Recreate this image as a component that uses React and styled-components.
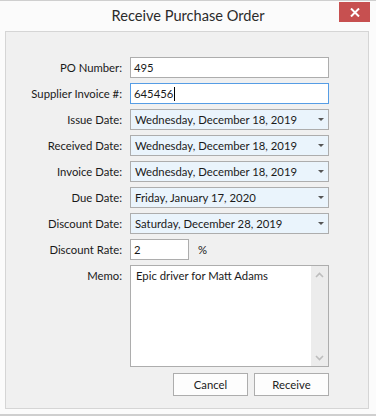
import { Fragment } from "react";
import styled, { createGlobalStyle } from "styled-components";

const Global = createGlobalStyle`
  html, body {
    margin: 0;
    padding: 0;
    background: #fbfbfb;
  }
  body {
    font-family: Lato, "Liberation Sans", sans-serif;
    font-size: 11.3px;
    color: #1a1a1a;
  }
`;

// 창 전체
const Window = styled.div`
  width: 376px;
  height: 416px;
  box-sizing: border-box;
  border-top: 1px solid #cfcfcf;
  border-bottom: 2px solid #cfcfcf;
  background: #fbfbfb;
  display: flex;
  flex-direction: column;
`;

const TitleBar = styled.div`
  height: 30px;
  display: grid;
  grid-template-columns: 1fr auto 1fr;
  align-items: start;
`;

const Title = styled.div`
  grid-column: 2;
  font-size: 14.6px;
  line-height: 29px;
  color: #2b2b2b;
`;

const CloseButton = styled.div`
  grid-column: 3;
  justify-self: end;
  margin: 1px 6px 0 0;
  width: 31px;
  height: 20px;
  background: #c75050;
  display: flex;
  align-items: center;
  justify-content: center;
`;

const Panel = styled.div`
  margin: 0 7px 0 5px;
  height: 378px;
  box-sizing: border-box;
  border: 1px solid #d5d5d5;
  background: #f0f0f0;
  padding: 25px 39px 0 0;
`;

const Form = styled.div`
  display: grid;
  grid-template-columns: 116px 199px;
  column-gap: 8px;
  row-gap: 5px;
  align-items: center;
`;

const Label = styled.div`
  text-align: right;
  align-self: ${(p) => (p.$top ? "start" : "center")};
  padding-top: ${(p) => (p.$top ? "4px" : "0")};
`;

const TextBox = styled.div`
  height: 21px;
  width: ${(p) => p.$width || "auto"};
  box-sizing: border-box;
  border: 1px solid ${(p) => (p.$focused ? "#569de5" : "#adadad")};
  background: #fff;
  padding: 0 3px;
  display: flex;
  align-items: center;
  white-space: nowrap;
`;

const Caret = styled.span`
  display: inline-block;
  width: 1px;
  height: 14px;
  background: #000;
  margin-left: 1px;
`;

const DateBox = styled.div`
  height: 21px;
  box-sizing: border-box;
  border: 1px solid #adadad;
  background: #eaf4fc;
  padding: 0 4px 0 4px;
  display: flex;
  align-items: center;
  justify-content: space-between;
  white-space: nowrap;
`;

const Arrow = styled.span`
  width: 0;
  height: 0;
  border-left: 3px solid transparent;
  border-right: 3px solid transparent;
  border-top: 3px solid #555;
`;

const RateRow = styled.div`
  display: flex;
  align-items: center;
  gap: 9px;
`;

const Memo = styled.div`
  height: 102px;
  box-sizing: border-box;
  border: 1px solid #adadad;
  background: #fff;
  display: flex;
`;

const MemoText = styled.div`
  flex: 1;
  padding: 3px 5px;
`;

const ScrollBar = styled.div`
  width: 17px;
  background: #ececec;
  display: flex;
  flex-direction: column;
  justify-content: space-between;
  align-items: center;
  padding: 6px 0 5px;
`;

const Buttons = styled.div`
  grid-column: 2;
  display: flex;
  justify-content: flex-end;
  gap: 6px;
  margin-top: 1px;
`;

const Button = styled.div`
  width: 75px;
  height: 23px;
  box-sizing: border-box;
  border: 1px solid #adadad;
  background: #fdfdfd;
  display: flex;
  align-items: center;
  justify-content: center;
  color: #222;
`;

const Chevron = ({ up }) => (
  <svg width="9" height="6" viewBox="0 0 9 6">
    <path
      d={up ? "M1 5 L4.5 1.5 L8 5" : "M1 1 L4.5 4.5 L8 1"}
      stroke="#bdbdbd"
      strokeWidth="1.6"
      fill="none"
    />
  </svg>
);

const dates = [
  ["Issue Date:", "Wednesday, December 18, 2019"],
  ["Received Date:", "Wednesday, December 18, 2019"],
  ["Invoice Date:", "Wednesday, December 18, 2019"],
  ["Due Date:", "Friday, January 17, 2020"],
  ["Discount Date:", "Saturday, December 28, 2019"],
];

const App = () => {
  return (
    <>
      <Global />
      <Window>
        <TitleBar>
          <Title>Receive Purchase Order</Title>
          <CloseButton>
            <svg width="10" height="9" viewBox="0 0 10 9">
              <path d="M1 0.5 L9 8.5 M9 0.5 L1 8.5" stroke="#fff" strokeWidth="2" />
            </svg>
          </CloseButton>
        </TitleBar>
        <Panel>
          <Form>
            <Label>PO Number:</Label>
            <TextBox>495</TextBox>
            <Label>Supplier Invoice #:</Label>
            <TextBox $focused>
              645456
              <Caret />
            </TextBox>
            {dates.map(([label, value]) => (
              <Fragment key={label}>
                <Label>{label}</Label>
                <DateBox>
                  {value}
                  <Arrow />
                </DateBox>
              </Fragment>
            ))}
            <Label>Discount Rate:</Label>
            <RateRow>
              <TextBox $width="59px">2</TextBox>
              <span>%</span>
            </RateRow>
            <Label $top>Memo:</Label>
            <Memo>
              <MemoText>Epic driver for Matt Adams</MemoText>
              <ScrollBar>
                <Chevron up />
                <Chevron />
              </ScrollBar>
            </Memo>
            <Buttons>
              <Button>Cancel</Button>
              <Button>Receive</Button>
            </Buttons>
          </Form>
        </Panel>
      </Window>
    </>
  );
};

export default App;
